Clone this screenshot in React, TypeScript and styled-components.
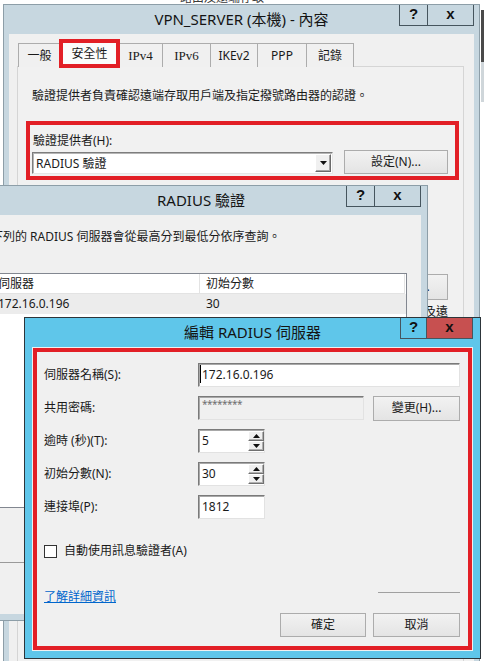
import React from "react";
import styled, { createGlobalStyle, css } from "styled-components";

const FONT = `"Noto Sans", "Noto Sans CJK TC", sans-serif`;

const GlobalStyle = createGlobalStyle`
  html, body { margin: 0; padding: 0; background: #ffffff; }
  #root { width: 494px; height: 661px; }
`;

const Desktop = styled.div`
  position: relative;
  width: 494px;
  height: 661px;
  overflow: hidden;
  background: #ffffff;
  font-family: ${FONT};
  font-size: 12px;
  line-height: 16px;
  color: #1a1a1a;
`;

const GhostTitle = styled.span`
  position: absolute;
  left: 180px;
  top: -8px;
  font-size: 12px;
  line-height: 12px;
  color: #3a3a3a;
  white-space: nowrap;
`;

const EdgeStrip = styled.div`
  position: absolute;
  left: 481px;
  top: 10px;
  width: 3px;
  height: 92px;
  background: linear-gradient(#4a4a4a 0 52px, #cfd6da 52px);
`;

const Window = styled.section<{
  $x: number;
  $y: number;
  $w: number;
  $h: number;
  $pad: number;
  $active?: boolean;
}>`
  position: absolute;
  left: ${(p) => p.$x}px;
  top: ${(p) => p.$y}px;
  width: ${(p) => p.$w}px;
  height: ${(p) => p.$h}px;
  box-sizing: border-box;
  display: flex;
  flex-direction: column;
  padding: 0 ${(p) => p.$pad}px ${(p) => p.$pad}px;
  background: ${(p) => (p.$active ? "#5fc6ea" : "#c7d7e0")};
  border: 1px solid ${(p) => (p.$active ? "#2d353a" : "#8d9ea8")};
`;

const TitleBar = styled.header`
  flex: none;
  height: 29px;
  display: grid;
  grid-template-columns: 1fr auto 1fr;
  align-items: center;
`;

const Title = styled.h1`
  grid-column: 2;
  margin: 0 0 2px;
  font-family: ${FONT};
  font-weight: 400;
  font-size: 15px;
  line-height: 20px;
  color: #141414;
  white-space: nowrap;
`;

const Caption = styled.div`
  grid-column: 3;
  justify-self: end;
  align-self: start;
  display: flex;
`;

const CapBtn = styled.div<{ $w: number; $close?: boolean }>`
  box-sizing: border-box;
  width: ${(p) => p.$w}px;
  height: 21px;
  display: flex;
  align-items: center;
  justify-content: center;
  border: 1px solid #46555e;
  border-top: none;
  font-family: "Liberation Sans", Arial, sans-serif;
  font-weight: 700;
  font-size: 15px;
  line-height: 14px;
  padding-bottom: 2px;
  color: #111;
  background: ${(p) => (p.$close ? "#c75050" : "transparent")};
  & + & {
    border-left: none;
  }
`;

const Client = styled.div<{ $pad: string }>`
  flex: 1;
  min-height: 0;
  display: flex;
  flex-direction: column;
  background: #f0f0f0;
  padding: ${(p) => p.$pad};
`;

/* ---------- property sheet (window 1) ---------- */

const TabStrip = styled.div`
  display: flex;
  align-items: flex-end;
  height: 27px;
  padding-left: 1px;
  position: relative;
  z-index: 1;
  margin-bottom: -1px;
`;

const Tab = styled.div<{ $w: number; $selected?: boolean; $serif?: boolean }>`
  box-sizing: border-box;
  width: ${(p) => p.$w}px;
  height: 24px;
  display: flex;
  align-items: center;
  justify-content: center;
  border: 1px solid #acacac;
  border-bottom: none;
  background: #f0f0f0;
  color: #1a1a1a;
  font-family: ${(p) => (p.$serif ? `"Liberation Serif", "Noto Sans CJK TC", serif` : FONT)};
  font-size: ${(p) => (p.$serif ? "13px" : "12px")};
  & + & {
    margin-left: -1px;
  }
  ${(p) =>
    p.$selected &&
    css`
      height: 27px;
      background: #fbfbfb;
      border-color: #acacac;
      position: relative;
      z-index: 2;
      padding-bottom: 1px;
      outline: 4px solid #e21f26;
      outline-offset: -3px;
    `}
`;

const Panel = styled.div`
  flex: 1;
  display: flex;
  flex-direction: column;
  border: 1px solid #d5d5d5;
  background: #f1f1f1;
  padding-top: 21px;
`;

const Para = styled.p<{ $indent?: number }>`
  margin: 0 0 0 ${(p) => p.$indent ?? 0}px;
  white-space: nowrap;
`;

const RedBox = styled.div<{ $grow?: boolean }>`
  border: 4px solid #e21f26;
  box-sizing: border-box;
  ${(p) =>
    p.$grow &&
    css`
      flex: 1;
      display: flex;
      flex-direction: column;
    `}
`;

const ProviderBox = styled(RedBox)`
  margin: 17px 4px 0 8px;
  display: grid;
  grid-template-columns: 301px 104px;
  column-gap: 11px;
  row-gap: 1px;
  align-items: end;
  padding: 8px 7px 2px 2px;
`;

const ProviderLabel = styled.div`
  grid-column: 1 / -1;
  padding-left: 1px;
`;

const Combo = styled.div`
  box-sizing: border-box;
  height: 22px;
  display: flex;
  align-items: stretch;
  background: #ffffff;
  border: 1px solid;
  border-color: #7d7d7d #e6e6e6 #e6e6e6 #7d7d7d;
  box-shadow: inset 1px 1px 0 #b5b5b5;
`;

const ComboValue = styled.div`
  flex: 1;
  padding: 2px 0 0 3px;
  line-height: 17px;
`;

const DropBtn = styled.div`
  box-sizing: border-box;
  width: 16px;
  margin: 1px;
  display: flex;
  align-items: center;
  justify-content: center;
  background: #f0f0f0;
  border: 1px solid;
  border-color: #ffffff #6a6a6a #6a6a6a #ffffff;
  box-shadow: inset -1px -1px 0 #a5a5a5;
`;

const PushButton = styled.div<{ $w: number; $h?: number }>`
  box-sizing: border-box;
  width: ${(p) => p.$w}px;
  height: ${(p) => p.$h ?? 24}px;
  display: flex;
  align-items: center;
  justify-content: center;
  border: 1px solid #acacac;
  background: linear-gradient(#f2f2f2, #e4e4e4);
  color: #1a1a1a;
  white-space: nowrap;
`;

const RightRow = styled.div<{ $top: number }>`
  display: flex;
  justify-content: flex-end;
  padding-right: 15px;
  margin-top: ${(p) => p.$top}px;
  white-space: nowrap;
`;

/* ---------- RADIUS list (window 2) ---------- */

const ListView = styled.div`
  box-sizing: border-box;
  margin-top: 28px;
  height: 235px;
  width: 416px;
  border: 1px solid #828790;
  background: #ffffff;
`;

const ListRow = styled.div<{ $header?: boolean }>`
  display: grid;
  grid-template-columns: 208px 205px;
  height: 20px;
  background: ${(p) => (p.$header ? "#ffffff" : "#ececec")};
`;

const Cell = styled.div<{ $header?: boolean }>`
  box-sizing: border-box;
  padding-left: 6px;
  line-height: 19px;
  white-space: nowrap;
  ${(p) =>
    p.$header &&
    css`
      border-right: 1px solid #e3e3e3;
      border-bottom: 1px solid #e3e3e3;
    `}
`;

const Divider = styled.div`
  margin-top: 54px;
  height: 1px;
  background: #9a9a9a;
`;

/* ---------- edit server dialog (window 3) ---------- */

const FormGrid = styled.div`
  display: grid;
  grid-template-columns: 154px 1fr;
  grid-auto-rows: 24px;
  row-gap: 9px;
  align-items: center;
`;

const Label = styled.div`
  white-space: nowrap;
  color: #1a1a1a;
`;

const Field = styled.div<{ $w?: number; $disabled?: boolean }>`
  box-sizing: border-box;
  height: 24px;
  width: ${(p) => (p.$w ? `${p.$w}px` : "100%")};
  display: flex;
  align-items: flex-start;
  background: ${(p) => (p.$disabled ? "#f0f0f0" : "#ffffff")};
  border: 1px solid;
  border-color: #7a7a7a #e2e2e2 #e2e2e2 #7a7a7a;
  box-shadow: inset 1px 1px 0 #a8a8a8;
  padding: 2px 0 0 3px;
  line-height: 17px;
`;

const Caret = styled.span`
  width: 1px;
  height: 18px;
  margin: -1px 1px 0 -2px;
  background: #000;
`;

const Masked = styled.span`
  font-size: 10px;
  line-height: 10px;
  color: #6f6f6f;
  letter-spacing: -0.5px;
`;

const FieldPair = styled.div`
  display: flex;
  gap: 9px;
`;

const FieldText = styled.span`
  flex: 1;
`;

const SpinCol = styled.div`
  width: 16px;
  align-self: stretch;
  margin: -1px 0 1px;
  display: flex;
  flex-direction: column;
`;

const SpinBtn = styled.div`
  flex: 1;
  box-sizing: border-box;
  display: flex;
  align-items: center;
  justify-content: center;
  background: #f0f0f0;
  border: 1px solid;
  border-color: #ffffff #707070 #707070 #ffffff;
  box-shadow: inset -1px -1px 0 #b0b0b0;
`;

const CheckRow = styled.div`
  display: flex;
  align-items: center;
  gap: 7px;
  margin-top: 24px;
  height: 16px;
`;

const CheckBox = styled.span`
  box-sizing: border-box;
  width: 13px;
  height: 13px;
  background: #ffffff;
  border: 1px solid #333333;
`;

const LinkRow = styled.div`
  display: flex;
  align-items: center;
  justify-content: space-between;
  margin-top: 30px;
  height: 16px;
`;

const HelpLink = styled.a`
  color: #0066cc;
  text-decoration: underline;
  cursor: pointer;
`;

const Rule = styled.div`
  width: 82px;
  height: 1px;
  background: #a0a0a0;
  margin-bottom: 10px;
`;

const ButtonRow = styled.div`
  display: flex;
  justify-content: flex-end;
  gap: 7px;
  margin-top: 8px;
`;

const ServerBox = styled(RedBox)`
  padding: 11px 8px 9px 7px;
`;

const Tri = ({ up }: { up?: boolean }) => (
  <svg width="7" height="4" viewBox="0 0 7 4">
    <polygon points={up ? "0,4 7,4 3.5,0" : "0,0 7,0 3.5,4"} fill="#111" />
  </svg>
);

const TitleButtons = ({ active }: { active?: boolean }) => (
  <Caption>
    <CapBtn $w={active ? 27 : 29}>?</CapBtn>
    <CapBtn $w={46} $close={active}>
      x
    </CapBtn>
  </Caption>
);

const tabs = [
  { label: "一般", w: 43 },
  { label: "安全性", w: 59, selected: true },
  { label: "IPv4", w: 45, serif: true },
  { label: "IPv6", w: 49, serif: true },
  { label: "IKEv2", w: 48 },
  { label: "PPP", w: 50 },
  { label: "記錄", w: 48 },
];

const SpinBox = ({ value }: { value: string }) => (
  <Field $w={67}>
    <FieldText>{value}</FieldText>
    <SpinCol>
      <SpinBtn>
        <Tri up />
      </SpinBtn>
      <SpinBtn>
        <Tri />
      </SpinBtn>
    </SpinCol>
  </Field>
);

export default function App() {
  return (
    <Desktop>
      <GlobalStyle />
      <GhostTitle>路由及遠端存取</GhostTitle>
      <EdgeStrip />

      {/* VPN_SERVER properties */}
      <Window $x={3} $y={4} $w={477} $h={700} $pad={5}>
        <TitleBar>
          <Title>VPN_SERVER (本機) - 內容</Title>
          <TitleButtons />
        </TitleBar>
        <Client $pad="6px 10px 0 8px">
          <TabStrip>
            {tabs.map((t) => (
              <Tab key={t.label} $w={t.w} $selected={t.selected} $serif={t.serif}>
                {t.label}
              </Tab>
            ))}
          </TabStrip>
          <Panel>
            <Para $indent={14}>驗證提供者負責確認遠端存取用戶端及指定撥號路由器的認證。</Para>
            <ProviderBox>
              <ProviderLabel>驗證提供者(H):</ProviderLabel>
              <Combo>
                <ComboValue>RADIUS 驗證</ComboValue>
                <DropBtn>
                  <Tri />
                </DropBtn>
              </Combo>
              <PushButton $w={104}>設定(N)...</PushButton>
            </ProviderBox>
            <RightRow $top={94}>
              <PushButton $w={87} $h={26}>設定(O)...</PushButton>
            </RightRow>
            <RightRow $top={4}>連線記錄以及遠</RightRow>
          </Panel>
        </Client>
      </Window>

      {/* RADIUS authentication */}
      <Window $x={-26} $y={185} $w={454} $h={436} $pad={6}>
        <TitleBar>
          <Title>RADIUS 驗證</Title>
          <TitleButtons />
        </TitleBar>
        <Client $pad="14px 14px 0 10px">
          <Para>下列的 RADIUS 伺服器會從最高分到最低分依序查詢。</Para>
          <ListView>
            <ListRow $header>
              <Cell $header>伺服器</Cell>
              <Cell $header>初始分數</Cell>
            </ListRow>
            <ListRow>
              <Cell>172.16.0.196</Cell>
              <Cell>30</Cell>
            </ListRow>
          </ListView>
          <Divider />
        </Client>
      </Window>

      {/* Edit RADIUS server */}
      <Window $x={24} $y={317} $w={457} $h={342} $pad={7} $active>
        <TitleBar>
          <Title>編輯 RADIUS 伺服器</Title>
          <TitleButtons active />
        </TitleBar>
        <Client $pad="1px">
          <ServerBox $grow>
            <FormGrid>
              <Label>伺服器名稱(S):</Label>
              <Field>
                <Caret />
                <FieldText>172.16.0.196</FieldText>
              </Field>

              <Label>共用密碼:</Label>
              <FieldPair>
                <Field $w={166} $disabled>
                  <Masked>********</Masked>
                </Field>
                <PushButton $w={87} $h={25}>變更(H)...</PushButton>
              </FieldPair>

              <Label>逾時 (秒)(T):</Label>
              <SpinBox value="5" />

              <Label>初始分數(N):</Label>
              <SpinBox value="30" />

              <Label>連接埠(P):</Label>
              <Field $w={67}>
                <FieldText>1812</FieldText>
              </Field>
            </FormGrid>

            <CheckRow>
              <CheckBox />
              <Label>自動使用訊息驗證者(A)</Label>
            </CheckRow>

            <LinkRow>
              <HelpLink>了解詳細資訊</HelpLink>
              <Rule />
            </LinkRow>

            <ButtonRow>
              <PushButton $w={86}>確定</PushButton>
              <PushButton $w={87}>取消</PushButton>
            </ButtonRow>
          </ServerBox>
        </Client>
      </Window>
    </Desktop>
  );
}
